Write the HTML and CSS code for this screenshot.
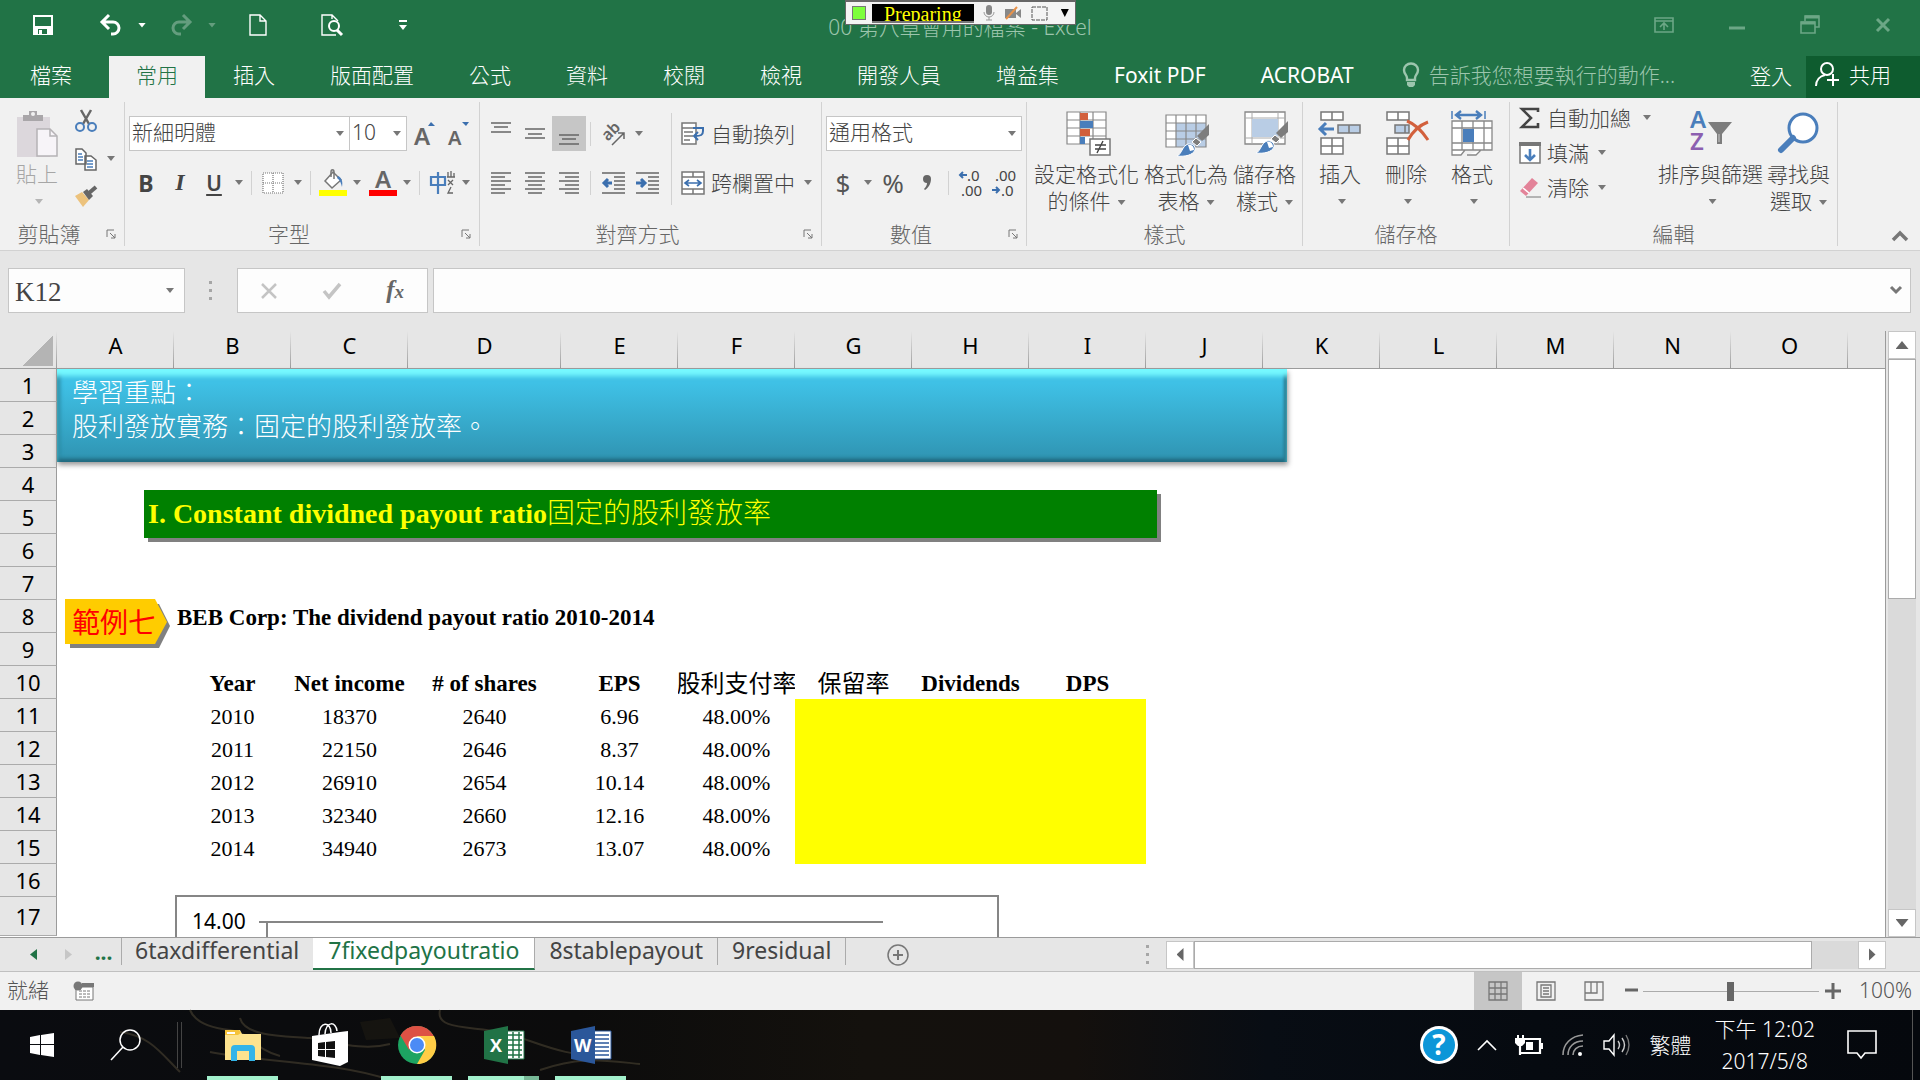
FILE: index.html
```html
<!DOCTYPE html>
<html lang="zh-Hant">

<head>
    <meta charset="UTF-8">
    <meta name="viewport" content="width=device-width, initial-scale=1.0">
    <title>00 第八章會用的檔案 - Excel</title>
    <link rel="stylesheet" href="styles.css">
</head>

<body>
    <header class="titlebar">
        <div class="quick">
            <button class="qbtn" aria-label="儲存檔案"><svg width="20" height="20"><path d="M1 1h18v18H1z" fill="none" stroke="#fff" stroke-width="2"/><path d="M2 11h16v8H2z" fill="#fff"/><path d="M5 14h9v5H5z" fill="#217346"/><path d="M6 15h3v4H6z" fill="#fff"/></svg></button>
            <button class="qbtn wide first" aria-label="復原"><svg width="22" height="22"><path d="M2 8h11a6 6 0 0 1 0 12h-2M9 1L2 8l7 7" fill="none" stroke="#fff" stroke-width="3"/></svg></button>
            <span class="caret white"></span>
            <button class="qbtn wide dim" aria-label="重複"><svg width="22" height="22"><path d="M20 8H9a6 6 0 0 0 0 12h2M13 1l7 7-7 7" fill="none" stroke="#fff" stroke-width="3"/></svg></button>
            <span class="caret white dim"></span>
            <button class="qbtn page" aria-label="開新檔案"><svg width="18" height="22"><path d="M1 1h10l6 6v14H1zM11 1v6h6" fill="none" stroke="#fff" stroke-width="1.4"/></svg></button>
            <button class="qbtn page" aria-label="預覽列印"><svg width="22" height="22"><path d="M17 7l-6-6H1v20h14M11 1v4" fill="none" stroke="#fff" stroke-width="1.4"/><circle cx="13" cy="12" r="5" fill="none" stroke="#fff" stroke-width="2"/><path d="M16 16l5 5" stroke="#fff" stroke-width="3"/></svg></button>
            <button class="qbtn more" aria-label="自訂快速存取工具列"><span></span><i class="caret white"></i></button>
        </div>
        <h1>00 第八章會用的檔案 - Excel</h1>
        <div class="window-buttons">
            <button aria-label="功能區顯示選項"><svg width="20" height="16"><path d="M1 1h18v14H1zM1 4h18M10 13V6M6 10l4-4 4 4" fill="none" stroke="#6ca786" stroke-width="1.6"/></svg></button>
            <button aria-label="最小化"><svg width="16" height="16"><path d="M0 11h16" stroke="#6ca786" stroke-width="3"/></svg></button>
            <button aria-label="還原"><svg width="20" height="20"><path d="M5 6V1h14v11h-4M1 7h14v11H1z" fill="none" stroke="#6ca786" stroke-width="1.6"/><path d="M5 2h14M1 8h14" stroke="#6ca786" stroke-width="3"/></svg></button>
            <button aria-label="關閉"><svg width="16" height="16"><path d="M2 2l12 12M14 2L2 14" stroke="#6ca786" stroke-width="3"/></svg></button>
        </div>
        <!-- screen recorder strip -->
        <div class="recorder">
            <span class="rec-state"></span>
            <span class="rec-text">Preparing</span>
            <svg width="12" height="16"><rect x="3" y="0" width="6" height="10" rx="3" fill="#888"/><path d="M1 7a5 5 0 0 0 10 0M6 12v3M3 15h6" fill="none" stroke="#999"/></svg>
            <svg width="18" height="14"><path d="M1 3h11v9H1zM12 7l5-4v9l-5-4z" fill="#888"/><path d="M2 13L13 1" stroke="#e8924a" stroke-width="2"/></svg>
            <svg width="17" height="15"><rect x="1" y="1" width="15" height="13" fill="none" stroke="#555" stroke-dasharray="4 1"/></svg>
            <i class="caret black"></i>
        </div>
    </header>

    <nav class="tabs">
        <button class="tab file">檔案</button>
        <button class="tab active">常用</button>
        <button class="tab">插入</button>
        <button class="tab">版面配置</button>
        <button class="tab">公式</button>
        <button class="tab">資料</button>
        <button class="tab">校閱</button>
        <button class="tab">檢視</button>
        <button class="tab">開發人員</button>
        <button class="tab">增益集</button>
        <button class="tab latin">Foxit PDF</button>
        <button class="tab latin">ACROBAT</button>
        <label class="tellme">
            <svg width="18" height="26"><path d="M5 18v-2C5 13 2 12 2 8a7 6.500 0 0 1 14 0c0 4-3 5-3 8v2z" fill="none" stroke="#9cc5ad" stroke-width="2.400"/><path d="M5 20h8v3l-2 2H7l-2-2z" fill="#9cc5ad"/></svg>
            <input type="text" placeholder="告訴我您想要執行的動作...">
        </label>
        <button class="tab login">登入</button>
        <button class="share"><svg width="24" height="26"><circle cx="12" cy="8" r="6" fill="none" stroke="#fff" stroke-width="2"/><path d="M1 25c0-6 4-10 9-11M12 19h12M18 13v12" fill="none" stroke="#fff" stroke-width="2"/></svg>共用</button>
    </nav>

    <section class="ribbon">
        <div class="group g-clip">
            <div class="body">
                <button class="big dim"><svg width="42" height="48"><path d="M1 8h33v40H1z" fill="#dcd7dc"/><path d="M7 6h6V2h8v4h6v6H7z" fill="#a9a6a9"/><circle cx="17" cy="5" r="2" fill="#f1f1f1"/><path d="M21 20h13l7 7v20H21z" fill="#f7f4f8" stroke="#b5b2b5" stroke-width="1.500"/><path d="M34 20v7h7" fill="none" stroke="#b5b2b5" stroke-width="1.500"/></svg><span>貼上</span><i class="caret"></i></button>
                <div class="stack">
                    <button class="tool" aria-label="剪下"><svg width="22" height="24"><path d="M6 1l8 14M16 1L8 15" stroke="#666" stroke-width="2.500"/><circle cx="5" cy="18" r="4" fill="none" stroke="#4a7ebb" stroke-width="2"/><circle cx="17" cy="18" r="4" fill="none" stroke="#4a7ebb" stroke-width="2"/></svg></button>
                    <div class="pair"><button class="tool" aria-label="複製"><svg width="22" height="24"><path d="M1 2h6l4 4v11H1zM10 9h6l5 4v10H10z" fill="#fff" stroke="#666" stroke-width="1.500"/><path d="M3 7h4M3 10h5M3 13h5M12 14h6M12 17h6M12 20h6" stroke="#4a7ebb" stroke-width="1.500"/></svg></button><i class="caret"></i></div>
                    <button class="tool" aria-label="複製格式"><svg width="24" height="22"><path d="M1 10l7-4 7 8-6 7z" fill="#ecc27c"/><path d="M9 6l4-3 6 7-4 4z" fill="#666"/><path d="M15 7l7-6" stroke="#666" stroke-width="4"/></svg></button>
                </div>
            </div>
            <div class="foot"><span>剪貼簿</span><button class="launch" aria-label="剪貼簿設定"><svg width="10" height="10"><path d="M1 8V1h7M4 4l5 5M9 5v4H5" fill="none" stroke="#777"/></svg></button></div>
        </div>

        <div class="group g-font">
            <div class="body rows">
                <div class="row">
                    <span class="combo name"><select aria-label="字型"><option>新細明體</option></select></span>
                    <span class="combo size"><select aria-label="字型大小"><option>10</option></select></span>
                    <button class="tool" aria-label="放大字型"><svg width="20" height="26"><text x="0" y="24" font-size="24" class="glyph">A</text><path d="M14 5l3-4 4 4z" fill="#3b6fae"/></svg></button>
                    <button class="tool" aria-label="縮小字型"><svg width="20" height="26"><text x="0" y="24" font-size="20" class="glyph">A</text><path d="M14 1h7l-3 4z" fill="#3b6fae"/></svg></button>
                </div>
                <div class="row">
                    <button class="tool bold">B</button>
                    <button class="tool italic">I</button>
                    <button class="tool under">U</button>
                    <i class="caret"></i><i class="sep"></i>
                    <button class="tool" aria-label="框線"><svg width="22" height="22"><path d="M1 1h20v20H1zM11 1v20M1 11h20" fill="#fff" stroke="#777" stroke-width="1.200" stroke-dasharray="1 1"/></svg></button>
                    <i class="caret"></i><i class="sep"></i>
                    <button class="tool" aria-label="填滿色彩"><svg width="28" height="28"><path d="M7 12l8-9 8 8-9 8z" fill="#fff" stroke="#777" stroke-width="1.500"/><path d="M13 8V3c0-3 3-3 3 0v7" fill="none" stroke="#777" stroke-width="1.500"/><path d="M20 7c4 2 5 6 4 11-1-4-2-7-5-9z" fill="#4a7ebb"/><path d="M1 21h28v6H1z" fill="#ff0"/></svg></button>
                    <i class="caret"></i>
                    <button class="tool" aria-label="字型色彩"><svg width="28" height="28"><text x="7" y="19" font-size="24" class="glyph">A</text><path d="M1 21h28v6H1z" fill="red"/></svg></button>
                    <i class="caret"></i><i class="sep"></i>
                    <button class="tool" aria-label="注音標示"><svg width="24" height="24"><path d="M2 6h14v8H2zM9 1v22" fill="none" stroke="#4a7ebb" stroke-width="2.200"/><path d="M19 1v5M22 0v6M25 2v4M18 6h8M19 9l5 5M24 9l-5 5M22 16l-3 6h5" fill="none" stroke="#666" stroke-width="1.300"/></svg></button>
                    <i class="caret"></i>
                </div>
            </div>
            <div class="foot"><span>字型</span><button class="launch" aria-label="字型設定"><svg width="10" height="10"><path d="M1 8V1h7M4 4l5 5M9 5v4H5" fill="none" stroke="#777"/></svg></button></div>
        </div>

        <div class="group g-align">
            <div class="body">
                <div class="rows">
                    <div class="row">
                        <button class="tool" aria-label="靠上對齊"><svg width="20" height="28"><path d="M0 3h20M3 7h14M0 12h20" class="ln"/></svg></button>
                        <button class="tool" aria-label="置中對齊"><svg width="20" height="28"><path d="M0 9h20M3 14h14M0 18h20" class="ln"/></svg></button>
                        <button class="tool on" aria-label="靠下對齊"><svg width="20" height="28"><path d="M0 15h20M3 19h14M0 24h20" class="ln"/></svg></button>
                        <i class="sep wide"></i>
                        <button class="tool turn" aria-label="方向"><svg width="22" height="22"><g transform="rotate(-45 11 11)"><text x="1" y="12" font-size="16" class="glyph">ab</text></g><path d="M9 22L21 10M15 10h6v6" fill="none" stroke="#666" stroke-width="1.500"/></svg></button>
                        <i class="caret"></i>
                    </div>
                    <div class="row">
                        <button class="tool" aria-label="靠左對齊"><svg width="20" height="24"><path d="M0 2h20M0 6h14M0 10h20M0 14h14M0 18h20M0 22h14" class="ln"/></svg></button>
                        <button class="tool" aria-label="置中"><svg width="20" height="24"><path d="M0 2h20M3 6h14M0 10h20M3 14h14M0 18h20M3 22h14" class="ln"/></svg></button>
                        <button class="tool" aria-label="靠右對齊"><svg width="20" height="24"><path d="M0 2h20M6 6h14M0 10h20M6 14h14M0 18h20M6 22h14" class="ln"/></svg></button>
                        <i class="sep wide"></i>
                        <button class="tool" aria-label="減少縮排"><svg width="24" height="24"><path d="M0 2h23M12 6h11M12 10h11M12 14h11M12 18h11M0 22h23" class="ln"/><path d="M10 12H2M6 8l-4 4 4 4" fill="none" stroke="#3b6fae" stroke-width="3"/></svg></button>
                        <button class="tool" aria-label="增加縮排"><svg width="24" height="24"><path d="M0 2h23M12 6h11M12 10h11M12 14h11M12 18h11M0 22h23" class="ln"/><path d="M0 12h8M5 8l4 4-4 4" fill="none" stroke="#3b6fae" stroke-width="3"/></svg></button>
                    </div>
                </div>
                <i class="sep tall"></i>
                <div class="rows">
                    <button class="labelled"><svg width="24" height="24"><path d="M1 1h14v21H1z" fill="#fff" stroke="#777" stroke-width="1.500"/><path d="M1 6h21M3 10h9M3 14h9M3 18h6" stroke="#777" stroke-width="1.300"/><path d="M12 6h10v3c0 4-2 5-8 5M17 10l-4 4 4 4" fill="none" stroke="#3b6fae" stroke-width="2"/></svg><span>自動換列</span></button>
                    <button class="labelled"><svg width="24" height="24"><path d="M1 1h22v22H1zM1 6h22M1 18h22M12 1v5M12 18v5" fill="#fff" stroke="#777" stroke-width="1.500"/><path d="M4 12h16M8 9l-4 3 4 3M16 9l4 3-4 3" fill="none" stroke="#3b6fae" stroke-width="1.600"/></svg><span>跨欄置中</span><i class="caret"></i></button>
                </div>
            </div>
            <div class="foot"><span>對齊方式</span><button class="launch" aria-label="對齊設定"><svg width="10" height="10"><path d="M1 8V1h7M4 4l5 5M9 5v4H5" fill="none" stroke="#777"/></svg></button></div>
        </div>

        <div class="group g-number">
            <div class="body rows">
                <span class="combo format"><select aria-label="數值格式"><option>通用格式</option></select></span>
                <div class="row">
                    <button class="tool sign">$</button>
                    <i class="caret"></i>
                    <button class="tool sign">%</button>
                    <button class="tool" aria-label="千分位樣式"><svg width="10" height="17"><path d="M5 1a4 4 0 0 1 4 4c0 5-3 9-6 11l-1-1c2-2 3-4 3-6a4 4 0 0 1 0-8z" fill="#666"/></svg></button>
                    <i class="sep"></i>
                    <button class="tool" aria-label="增加小數位數"><svg width="24" height="28"><text x="9" y="12" font-size="15" class="num">.0</text><text x="3" y="27" font-size="15" class="num">.00</text><path d="M9 6H2M5 3L2 6l3 3" fill="none" stroke="#3b6fae" stroke-width="2"/></svg></button>
                    <button class="tool" aria-label="減少小數位數"><svg width="24" height="28"><text x="3" y="12" font-size="15" class="num">.00</text><text x="9" y="27" font-size="15" class="num">.0</text><path d="M0 21h7M4 18l3 3-3 3" fill="none" stroke="#3b6fae" stroke-width="2"/></svg></button>
                </div>
            </div>
            <div class="foot"><span>數值</span><button class="launch" aria-label="數值設定"><svg width="10" height="10"><path d="M1 8V1h7M4 4l5 5M9 5v4H5" fill="none" stroke="#777"/></svg></button></div>
        </div>

        <div class="group g-style">
            <div class="body">
                <button class="big"><svg width="42" height="48"><path d="M1 3h39v32H1zM14 3v32M27 3v32M1 11h39M1 19h39M1 27h39" fill="#fff" stroke="#888" stroke-width="1.200"/><path d="M14 4h8v7h-8zM14 20h10v7H14z" fill="#d2603c"/><path d="M14 12h13v7H14zM14 28h5v7h-5z" fill="#4a7ebb"/><path d="M24 30h20v16H24z" fill="#fff" stroke="#777" stroke-width="1.500"/><path d="M29 36h11M29 40h11M37 32l-6 12" stroke="#444" stroke-width="1.400"/></svg><span>設定格式化<br>的條件<i class="caret"></i></span></button>
                <button class="big"><svg width="42" height="48"><path d="M1 6h40v32H1z" fill="#fff"/><path d="M11 14h30v24H11z" fill="#b9cde5"/><path d="M1 6h40v32H1zM11 6v32M21 6v32M31 6v32M1 14h40M1 22h40M1 30h40" fill="none" stroke="#888" stroke-width="1.200"/><path d="M44 15v11l-7 6-5-5z" fill="#7d7d7d"/><path d="M31 29l5 4-4 4-5-4z" fill="#7d7d7d" stroke="#fff"/><path d="M12 47c5-2 5-10 11-12 4-1 8 2 7 6-2 5-10 7-18 6z" fill="#4a7ebb" stroke="#fff"/><path d="M23 36c4-1 6 2 6 5l-4 1z" fill="#fff"/></svg><span>格式化為<br>表格<i class="caret"></i></span></button>
                <button class="big"><svg width="42" height="48"><path d="M1 3h40v32H1z" fill="#fff" stroke="#888" stroke-width="1.300"/><path d="M1 9h40M1 29h40M8 3v32M34 3v32" stroke="#aaa"/><path d="M8 10h26v18H8z" fill="#b9cde5"/><path d="M44 12v11l-7 6-5-5z" fill="#7d7d7d"/><path d="M31 26l5 4-4 4-5-4z" fill="#7d7d7d" stroke="#fff"/><path d="M12 44c5-2 5-10 11-12 4-1 8 2 7 6-2 5-10 7-18 6z" fill="#4a7ebb" stroke="#fff"/><path d="M23 33c4-1 6 2 6 5l-4 1z" fill="#fff"/></svg><span>儲存格<br>樣式<i class="caret"></i></span></button>
            </div>
            <div class="foot"><span>樣式</span></div>
        </div>

        <div class="group g-cells">
            <div class="body">
                <button class="big"><svg width="46" height="48"><path d="M4 3h22v8H4zM15 3v8M4 29h22v16H4zM15 29v16M4 37h22" fill="#fff" stroke="#777" stroke-width="1.500"/><path d="M21 16h22v8H21zM32 16v8" fill="#b9cde5" stroke="#777" stroke-width="1.500"/><path d="M17 20H3M9 14l-6 6 6 6" fill="none" stroke="#4a7ebb" stroke-width="3"/></svg><span>插入</span><i class="caret"></i></button>
                <button class="big"><svg width="46" height="48"><path d="M4 3h22v8H4zM15 3v8M4 29h22v16H4zM15 29v16M4 37h22" fill="#fff" stroke="#777" stroke-width="1.500"/><path d="M12 16h14v8H12zM22 16v8" fill="#b9cde5" stroke="#777" stroke-width="1.500"/><path d="M24 12c8 3 15 10 21 19M45 13c-8 3-15 9-20 18" fill="none" stroke="#d2603c" stroke-width="3"/></svg><span>刪除</span><i class="caret"></i></button>
                <button class="big"><svg width="46" height="48"><path d="M3 2v8M36 2v8" stroke="#4a7ebb" stroke-width="1.500"/><path d="M7 6h25M12 2L7 6l5 4M27 2l5 4-5 4" fill="none" stroke="#4a7ebb" stroke-width="2.400"/><path d="M3 12h40v29H3zM13 12v29M24 12v29M35 12v29M3 19h40M3 34h40M3 41v5h9l4-5M18 46h9l5-5" fill="#fff" stroke="#888" stroke-width="1.300"/><path d="M14 20h11v13H14z" fill="#4a7ebb"/></svg><span>格式</span><i class="caret"></i></button>
            </div>
            <div class="foot"><span>儲存格</span></div>
        </div>

        <div class="group g-edit">
            <div class="body">
                <div class="list">
                    <button class="labelled"><svg width="22" height="22"><path d="M19 5V2H3l9 9-9 9h16v-4" fill="none" stroke="#444" stroke-width="2.600"/></svg><span>自動加總</span><i class="caret far"></i></button>
                    <button class="labelled"><svg width="22" height="22"><path d="M1 1h20v20H1z" fill="#fff" stroke="#777" stroke-width="1.500"/><path d="M0 0h22v4H0z" fill="#777"/><path d="M11 7v11M6 13l5 5 5-5" fill="none" stroke="#4a7ebb" stroke-width="2.600"/></svg><span>填滿</span><i class="caret"></i></button>
                    <button class="labelled"><svg width="22" height="22"><path d="M1 14L13 1l6 5L7 19z" fill="#e38399"/><path d="M4 11l6 5" stroke="#fff" stroke-width="1.500"/><path d="M7 20h15" stroke="#777"/></svg><span>清除</span><i class="caret"></i></button>
                </div>
                <button class="big"><svg width="46" height="48"><text x="2" y="19" font-size="24" fill="#4a7ebb" class="az">A</text><text x="2" y="41" font-size="24" fill="#8c5fb0" class="az">Z</text><path d="M20 13h24L34 25v10h-5V25z" fill="#7d7d7d"/><path d="M31 25v8" stroke="#ccc"/></svg><span>排序與篩選</span><i class="caret"></i></button>
                <button class="big"><svg width="46" height="48"><circle cx="27" cy="19" r="14" fill="#fff" stroke="#4a7ebb" stroke-width="3"/><path d="M17 29L5 41" stroke="#4a7ebb" stroke-width="6" stroke-linecap="round"/></svg><span>尋找與<br>選取<i class="caret"></i></span></button>
            </div>
            <div class="foot"><span>編輯</span></div>
        </div>
        <button class="collapse" aria-label="摺疊功能區"><svg width="18" height="12"><path d="M2 10l7-7 7 7" fill="none" stroke="#777" stroke-width="3.500"/></svg></button>
    </section>

    <section class="formula">
        <span class="namebox"><input type="text" value="K12" aria-label="名稱方塊"><i class="caret"></i></span>
        <span class="dots"></span>
        <div class="fx">
            <button aria-label="取消"><svg width="18" height="18"><path d="M2 2l14 14M16 2L2 16" stroke="#c4c4c4" stroke-width="2.500"/></svg></button>
            <button aria-label="輸入"><svg width="20" height="18"><path d="M2 9l5 6L18 2" fill="none" stroke="#c4c4c4" stroke-width="3.500"/></svg></button>
            <button class="fxbtn"><i>f</i><small>x</small></button>
        </div>
        <span class="formula-input"><input type="text" aria-label="資料編輯列"><svg width="12" height="9"><path d="M1 1l5 5 5-5" fill="none" stroke="#777" stroke-width="3"/></svg></span>
    </section>

    <main class="work">
        <div class="sheet">
            <table>
                <colgroup>
                    <col class="rowno"><col><col><col><col class="c-d"><col><col><col><col><col><col><col><col><col><col><col><col class="rest">
                </colgroup>
                <thead>
                    <tr><th class="corner"></th><th>A</th><th>B</th><th>C</th><th>D</th><th>E</th><th>F</th><th>G</th><th>H</th><th>I</th><th>J</th><th>K</th><th>L</th><th>M</th><th>N</th><th>O</th><th></th></tr>
                </thead>
                <tbody>
                    <tr><th>1</th></tr>
                    <tr><th>2</th></tr>
                    <tr><th>3</th></tr>
                    <tr><th>4</th></tr>
                    <tr><th>5</th></tr>
                    <tr><th>6</th></tr>
                    <tr><th>7</th></tr>
                    <tr><th>8</th><td></td><td colspan="6" class="caption">BEB Corp: The dividend payout ratio 2010-2014</td></tr>
                    <tr><th>9</th></tr>
                    <tr class="heads"><th>10</th><td></td><td>Year</td><td>Net income</td><td># of shares</td><td>EPS</td><td class="zh"><span>股利支付率</span></td><td class="zh"><span>保留率</span></td><td>Dividends</td><td>DPS</td></tr>
                    <tr><th>11</th><td></td><td>2010</td><td>18370</td><td>2640</td><td>6.96</td><td>48.00%</td><td class="fill"></td><td class="fill"></td><td class="fill"></td></tr>
                    <tr><th>12</th><td></td><td>2011</td><td>22150</td><td>2646</td><td>8.37</td><td>48.00%</td><td class="fill"></td><td class="fill"></td><td class="fill"></td></tr>
                    <tr><th>13</th><td></td><td>2012</td><td>26910</td><td>2654</td><td>10.14</td><td>48.00%</td><td class="fill"></td><td class="fill"></td><td class="fill"></td></tr>
                    <tr><th>14</th><td></td><td>2013</td><td>32340</td><td>2660</td><td>12.16</td><td>48.00%</td><td class="fill"></td><td class="fill"></td><td class="fill"></td></tr>
                    <tr><th>15</th><td></td><td>2014</td><td>34940</td><td>2673</td><td>13.07</td><td>48.00%</td><td class="fill"></td><td class="fill"></td><td class="fill"></td></tr>
                    <tr><th>16</th></tr>
                    <tr class="last"><th>17</th></tr>
                </tbody>
            </table>
            <!-- drawing objects floating over the cells -->
            <div class="note">學習重點：<br>股利發放實務：固定的股利發放率。</div>
            <div class="banner">I. Constant dividned payout ratio<span>固定的股利發放率</span></div>
            <div class="example">
                <svg width="108" height="51"><path d="M5 5h89l11 22-11 22H5z" fill="#808080"/><path d="M0 0h90l12 23-12 22H0z" fill="#fc0"/></svg>
                <span>範例七</span>
            </div>
            <div class="chart">
                <span>14.00</span>
                <svg width="624" height="20"><path d="M0 5h624" stroke="#868686" stroke-width="2"/><path d="M8 5v25" stroke="#868686" stroke-width="2"/></svg>
            </div>
        </div>
        <div class="vscroll">
            <button aria-label="向上捲動"><i class="up"></i></button>
            <div class="thumb"></div>
            <div class="track"></div>
            <button aria-label="向下捲動"><i class="down"></i></button>
        </div>
    </main>

    <div class="sheetbar">
        <button class="nav" aria-label="上一張"><i class="left green"></i></button>
        <button class="nav" aria-label="下一張"><i class="right pale"></i></button>
        <button class="nav ell">...</button>
        <button class="stab">6taxdifferential</button>
        <button class="stab current">7fixedpayoutratio</button>
        <button class="stab">8stablepayout</button>
        <button class="stab">9residual</button>
        <button class="add" aria-label="新工作表"><svg width="24" height="24"><circle cx="12" cy="12" r="10" fill="none" stroke="#777" stroke-width="1.500"/><path d="M12 7v10M7 12h10" stroke="#777" stroke-width="2"/></svg></button>
        <span class="dots"></span>
        <div class="hscroll">
            <button aria-label="向左捲動"><i class="left"></i></button>
            <div class="thumb"></div>
            <div class="track"></div>
            <button aria-label="向右捲動"><i class="right"></i></button>
        </div>
    </div>

    <div class="status">
        <span>就緒</span>
        <svg class="macro" width="22" height="20"><path d="M3 6h17v13H3z" fill="#fff" stroke="#777"/><path d="M9 2h12v4H9z" fill="#777"/><path d="M6 10h12M6 13h12M6 16h12" stroke="#777" stroke-dasharray="3 1"/><circle cx="5" cy="5" r="4.500" fill="#777"/></svg>
        <button class="view on" aria-label="標準模式"><svg width="20" height="20"><path d="M1 1h18v18H1zM7 1v18M13 1v18M1 7h18M1 13h18" fill="none" stroke="#777" stroke-width="1.300"/></svg></button>
        <button class="view" aria-label="整頁模式"><svg width="20" height="20"><path d="M1 1h18v18H1zM5 4h10v12H5zM7 7h6M7 10h6M7 13h6" fill="none" stroke="#777" stroke-width="1.300"/></svg></button>
        <button class="view" aria-label="分頁預覽"><svg width="20" height="20"><path d="M1 1h18v18H1zM1 12h12V1M7 1v11" fill="none" stroke="#777" stroke-width="1.300"/></svg></button>
        <button class="zoom" aria-label="縮小"><svg width="16" height="16"><path d="M1 7h13" stroke="#666" stroke-width="3"/></svg></button>
        <input type="range" aria-label="縮放" value="50">
        <button class="zoom in" aria-label="放大"><svg width="16" height="16"><path d="M0 8h16M8 0v16" stroke="#666" stroke-width="3"/></svg></button>
        <span class="percent">100%</span>
    </div>

    <footer class="taskbar">
        <svg class="texture" width="900" height="70" fill="none" stroke="#4a4232" stroke-width="2"><path d="M190 0c5 12 20 18 40 20s25 20 50 26M240 8c5 20 50 18 70 20s50 14 80 6M210 42c50 10 130 10 180 28M440 0c-5 20 30 16 60 22s60 26 110 24M540 60c40-14 60-10 100-6M120 22c30 4 40 20 60 40"/><path d="M360 12l30-4 10 20-34 2z" fill="#1d1a12" stroke="none"/></svg>
        <button class="start" aria-label="開始"><svg width="24" height="24" fill="#fff"><path d="M0 4l10-2v9H0zM11 2l13-2v11H11zM0 12h10v10L0 20zM11 12h13v12l-13-2z"/></svg></button>
        <button class="start search" aria-label="搜尋"><svg width="32" height="32"><circle cx="20" cy="11" r="10" fill="none" stroke="#fff" stroke-width="1.500"/><path d="M13 18L1 31" stroke="#fff" stroke-width="1.500"/></svg></button>
        <i class="divider"></i>
        <button class="app open" aria-label="檔案總管"><svg width="38" height="34"><path d="M1 2h15l2 4h19v26H1z" fill="#fde38f"/><path d="M1 2h14l2 3-3 2H1z" fill="#f5c33b"/><path d="M3 4h8v2H3z" fill="#fff"/><path d="M7 33V21q0-4 4-4h16q4 0 4 4v12h-6V23H13v10z" fill="#33b4e8"/></svg></button>
        <button class="app" aria-label="市集"><svg width="38" height="44"><path d="M8 12C8-2 20-2 20 10M14 11C15-2 25-2 26 8" fill="none" stroke="#fff" stroke-width="1.500"/><path d="M1 13l28-4 8-1v31l-8 4-28-6z" fill="#fff"/><path d="M7 20l7-1v7H7zM15 19l9-1v8h-9zM7 27h7v7l-7-1zM15 27h9v8l-9-1z" fill="#111"/></svg></button>
        <button class="app open" aria-label="Chrome"><svg width="40" height="40"><circle cx="20" cy="20" r="19" fill="#1da462"/><path d="M20 20L3.500 10.500A19 19 0 0 1 36.500 10.500z" fill="#dd5144"/><path d="M20 11h17A19 19 0 0 1 20 39l8-14z" fill="#ffcd46"/><path d="M3.500 10.500L12 25l8-14h16.500A19 19 0 0 0 3.500 10.500z" fill="#dd5144"/><circle cx="20" cy="20" r="8.500" fill="#fff"/><circle cx="20" cy="20" r="7" fill="#4c8bf5"/></svg></button>
        <button class="app open multi" aria-label="Excel"><svg width="40" height="38"><path d="M20 5h20v28H20z" fill="#fff" stroke="#217346"/><path d="M23 9h15M23 14h15M23 19h15M23 24h15M23 29h15M29 6v26M35 6v26" stroke="#217346" stroke-width="1.500"/><path d="M0 5l24-5v38L0 33z" fill="#217346"/><text x="6" y="26" class="logo">X</text></svg></button>
        <button class="app open" aria-label="Word"><svg width="40" height="38"><path d="M20 5h20v28H20z" fill="#fff" stroke="#2b579a"/><path d="M23 9h15M23 13h15M23 17h15M23 21h15M23 25h15M23 29h15" stroke="#2b579a" stroke-width="1.600"/><path d="M0 5l24-5v38L0 33z" fill="#2b579a"/><text x="3" y="26" class="logo">W</text></svg></button>
        <div class="tray">
            <svg width="40" height="40"><circle cx="20" cy="20" r="19" fill="#fff"/><circle cx="20" cy="20" r="16" fill="#0c96d8"/><text x="20" y="30" text-anchor="middle" class="help">?</text></svg>
            <svg width="20" height="12"><path d="M1 11l9-9 9 9" fill="none" stroke="#fff" stroke-width="1.600"/></svg>
            <svg width="28" height="20"><path d="M8 4h17v14H5M5 8v12" fill="none" stroke="#fff" stroke-width="2.200"/><path d="M11 7h7v8h-7zM25 8h3v6h-3zM0 3h10v5l-3 3H3L0 8zM2 0h2v4H2zM7 0h2v4H7z" fill="#fff"/></svg>
            <svg width="24" height="24" fill="none" stroke="#999" stroke-width="1.600"><path d="M2 22C2 11 10 3 22 2M7 22c0-8 6-14 15-14M12 22c0-5 4-9 10-9"/><circle cx="19" cy="21" r="2" fill="#fff" stroke="none"/></svg>
            <svg width="28" height="24" fill="none" stroke="#fff" stroke-width="1.400"><path d="M1 8h5l5-6v20l-5-6H1z"/><path d="M15 8q3 4 0 8M19 5q5 7 0 14" stroke="#ccc"/><path d="M23 2q6 10 0 20" stroke="#777"/></svg>
            <span>繁體</span>
            <time>下午 12:02<br>2017/5/8</time>
            <svg class="action" width="30" height="30"><path d="M1 1h28v22H18l-4 5-4-5H1z" fill="none" stroke="#fff" stroke-width="1.600"/></svg>
            <i class="peek"></i>
        </div>
    </footer>
</body>

</html>
```
FILE: styles.css
```css
* {
    box-sizing: border-box;
}

body {
    margin: 0;
    height: 100vh;
    display: flex;
    flex-direction: column;
    overflow: hidden;
    background-color: #e6e6e6;
    font-family: "Noto Sans", "Noto Sans CJK TC", sans-serif;
    font-weight: 300;
    font-size: 21px;
    color: #444;
}

button,
input,
select {
    font: inherit;
    color: inherit;
    margin: 0;
    padding: 0;
    border: 0;
    border-radius: 0;
    background: none;
}

svg {
    display: block;
    flex: none;
    overflow: visible;
}

.caret {
    display: inline-block;
    flex: none;
    width: 8px;
    height: 5px;
    margin: 0 4px;
    background-color: #777;
    clip-path: polygon(0 0, 100% 0, 50% 100%);
}

.caret.white {
    background-color: #fff;
}

.caret.black {
    background-color: #000;
    height: 8px;
}

.dim {
    opacity: 0.3;
}

/* title bar */
.titlebar {
    position: relative;
    flex: none;
    height: 56px;
    display: flex;
    align-items: center;
    justify-content: space-between;
    padding: 0 13px 6px 24px;
    background-color: #217346;
}

.titlebar h1 {
    position: absolute;
    left: 50%;
    top: 12px;
    margin: 0;
    transform: translateX(-50%);
    font-size: 21px;
    line-height: 30px;
    font-weight: 300;
    color: #9cc5ad;
    white-space: nowrap;
}

.quick {
    display: flex;
    align-items: center;
}

.qbtn {
    width: 38px;
    height: 38px;
    display: grid;
    place-items: center;
}

.qbtn.wide {
    width: 42px;
    margin-left: 10px;
}

.qbtn.wide.first {
    margin-left: 28px;
}

.qbtn.wide + .caret {
    margin: 0 4px 0 6px;
}

.qbtn.page {
    margin-left: 15px;
    width: 46px;
    margin-right: 13px;
}

.qbtn.more {
    margin-left: 16px;
    align-content: center;
    gap: 3px;
}

.qbtn.more span {
    width: 8px;
    height: 2px;
    background-color: #fff;
}

.window-buttons {
    display: flex;
    gap: 25px;
}

.window-buttons button {
    width: 48px;
    display: grid;
    place-items: center;
}

.recorder {
    position: absolute;
    left: 44%;
    top: 0;
    width: 231px;
    height: 25px;
    display: flex;
    align-items: center;
    gap: 9px;
    padding: 0 4px 0 6px;
    background-color: #f4f4f4;
    border: 1px solid #666;
    border-top-width: 2px;
}

.rec-state {
    width: 14px;
    height: 14px;
    background-color: #7dff3c;
    border: 1px solid #777;
}

.rec-text {
    width: 102px;
    height: 19px;
    overflow: hidden;
    background-color: #000;
    color: #ff0;
    font-family: "Liberation Serif", serif;
    font-size: 20px;
    line-height: 21px;
    text-align: center;
    border-bottom: 2px solid #777;
}

.recorder .rec-state + .rec-text {
    margin-left: -3px;
}

.recorder .caret {
    margin: 0 0 0 4px;
}

/* ribbon tabs */
.tabs {
    flex: none;
    height: 42px;
    display: flex;
    gap: 1px;
    background-color: #217346;
    color: #fff;
}

.tab {
    padding: 0 27px 6px;
    white-space: nowrap;
}

.tab.file {
    padding: 0 36px 6px 30px;
}

.tab.active {
    background-color: #f1f1f1;
    color: #217346;
}

.tab.latin {
    font-weight: 400;
    padding-bottom: 4px;
}

.tellme {
    flex: 1;
    display: flex;
    align-items: center;
    gap: 9px;
    padding: 0 0 4px 20px;
}

.tellme input {
    flex: 1;
    min-width: 0;
    outline: none;
}

.tellme input::placeholder {
    color: #9cc5ad;
    opacity: 1;
}

.tab.login {
    padding: 0 13px 4px;
}

.share {
    display: flex;
    align-items: center;
    gap: 10px;
    padding: 0 29px 6px 9px;
    background-color: #0e5c2f;
}

/* ribbon */
.ribbon {
    flex: none;
    height: 153px;
    display: flex;
    padding: 4px 0;
    background-color: #f1f1f1;
    border-bottom: 1px solid #d2d2d2;
}

.group {
    flex: none;
    display: flex;
    flex-direction: column;
    border-right: 1px solid #d2d2d2;
}

.body {
    flex: 1;
    display: flex;
}

.foot {
    height: 25px;
    display: flex;
    align-items: center;
    color: #666;
}

.foot span {
    flex: 1;
    text-align: center;
    line-height: 24px;
}

.launch {
    width: 26px;
    display: grid;
    place-items: center;
}

.g-clip {
    width: 125px;
}

.g-clip .body {
    padding-left: 10px;
}

.g-font {
    width: 355px;
}

.g-align {
    width: 342px;
}

.g-number {
    width: 205px;
}

.g-style {
    width: 276px;
}

.g-cells {
    width: 207px;
}

.g-edit {
    width: 328px;
}

.rows {
    display: flex;
    flex-direction: column;
    gap: 14px;
    padding-top: 14px;
}

.g-font .rows,
.g-number .rows,
.g-align .body {
    padding-left: 4px;
}

.row {
    height: 35px;
    display: flex;
    align-items: center;
}

.tool {
    width: 34px;
    height: 35px;
    flex: none;
    display: grid;
    place-items: center;
}

.tool.on {
    background-color: #c6c6c6;
}

.tool.bold {
    font-weight: 700;
    font-size: 23px;
}

.tool.italic {
    font-family: "Liberation Serif", serif;
    font-style: italic;
    font-weight: 700;
    font-size: 24px;
}

.tool.under {
    font-weight: 600;
    font-size: 21px;
    text-decoration: underline;
    text-underline-offset: 3px;
}

.tool.sign {
    font-size: 26px;
    font-weight: 400;
    color: #555;
}

.sep {
    width: 1px;
    height: 24px;
    margin: 0 4px;
    background-color: #d2d2d2;
}

.sep.wide {
    margin: 0 6px 0 4px;
}

.sep.tall {
    height: 92px;
    margin: 11px 9px 0 6px;
}

.ln {
    stroke: #666;
    stroke-width: 1.5px;
}

.glyph {
    font-family: "Noto Sans", sans-serif;
    font-weight: 600;
    fill: #666;
}

.num {
    font-family: "Noto Sans", sans-serif;
    font-weight: 400;
    fill: #444;
}

.az {
    font-family: "Noto Sans", sans-serif;
    font-weight: 600;
}

.combo {
    position: relative;
    display: block;
    height: 35px;
    border: 1px solid #c6c6c6;
    background-color: #fff;
}

.combo select {
    width: 100%;
    height: 100%;
    padding: 0 0 3px 2px;
    appearance: none;
    outline: none;
}

.combo::after {
    content: "";
    position: absolute;
    right: 5px;
    top: 14px;
    width: 8px;
    height: 5px;
    background-color: #777;
    clip-path: polygon(0 0, 100% 0, 50% 100%);
}

.combo.name {
    width: 221px;
    margin-right: -1px;
}

.combo.size {
    width: 58px;
}

.combo.format {
    width: 196px;
}

.labelled {
    height: 35px;
    display: flex;
    align-items: center;
    gap: 6px;
    white-space: nowrap;
}

.labelled span {
    padding-bottom: 2px;
}

.labelled .caret {
    margin: 0 3px;
}

.labelled .caret.far {
    margin-left: 6px;
}

.big {
    flex: none;
    display: flex;
    flex-direction: column;
    align-items: center;
    padding: 7px 2px 0;
    line-height: 27px;
    white-space: nowrap;
}

.big svg {
    margin-bottom: 4px;
}

.big .caret {
    margin: 11px 0 0 4px;
}

.big span .caret {
    margin: 0 0 4px 7px;
}

.big.dim {
    width: 54px;
    opacity: 1;
    color: #a6a6a6;
}

.big.dim .caret {
    background-color: #b5b5b5;
}

.stack {
    display: flex;
    flex-direction: column;
    gap: 3px;
    padding: 1px 0 0 5px;
}

.pair {
    display: flex;
    align-items: center;
}

.g-style .body {
    gap: 1px;
    padding-left: 5px;
}

.g-cells .body {
    padding-left: 4px;
}

.g-cells .big {
    width: 66px;
}

.g-edit .body {
    padding-left: 9px;
}

.list {
    width: 137px;
    margin-top: -2px;
}

.collapse {
    margin-left: auto;
    align-self: flex-end;
    padding: 0 11px 4px;
}

/* formula bar */
.formula {
    flex: none;
    display: flex;
    padding: 17px 9px 18px 8px;
}

.namebox,
.fx,
.formula-input {
    height: 45px;
    display: flex;
    align-items: center;
    background-color: #fdfdfd;
    border: 1px solid #c6c6c6;
}

.namebox {
    width: 177px;
    padding: 0 6px 0;
    font-family: "Liberation Serif", serif;
    font-size: 27px;
}

.namebox input {
    flex: 1;
    min-width: 0;
    padding-top: 4px;
    outline: none;
}

.dots {
    width: 3px;
    height: 20px;
    align-self: center;
    background: repeating-linear-gradient(#a6a6a6 0 3px, transparent 3px 8px);
}

.formula .dots {
    margin: 0 25px 0 24px;
}

.fx {
    width: 191px;
    justify-content: space-between;
    padding: 0 23px 0 22px;
    margin-right: 5px;
}

.fxbtn {
    font-family: "Liberation Serif", serif;
    font-weight: 700;
    font-style: italic;
    font-size: 25px;
    line-height: 30px;
    color: #666;
}

.fxbtn small {
    font-size: 19px;
}

.formula-input {
    flex: 1;
    padding: 0 8px;
}

.formula-input input {
    flex: 1;
    outline: none;
}

/* worksheet */
.work {
    flex: 1;
    min-height: 0;
    display: flex;
}

.sheet {
    position: relative;
    flex: 1;
    min-width: 0;
    overflow: hidden;
    background-color: #fff;
    border-right: 1px solid #9b9b9b;
}

.sheet table {
    width: 100%;
    table-layout: fixed;
    border-collapse: separate;
    border-spacing: 0;
    font-family: "Liberation Serif", "Noto Sans CJK TC", serif;
    font-size: 22px;
    font-weight: 400;
    color: #000;
}

.sheet col {
    width: 117px;
}

.sheet col.rowno {
    width: 57px;
}

.sheet col.c-d {
    width: 153px;
}

.sheet col.rest {
    width: auto;
}

.sheet th {
    font-family: "Noto Sans", sans-serif;
    font-weight: 400;
    background-color: #e6e6e6;
}

.sheet thead th {
    height: 38px;
    padding: 0 0 9px;
    line-height: 28px;
    border-bottom: 1px solid #9b9b9b;
    background: linear-gradient(#e6e6e6, #9b9b9b) right / 1px 100% no-repeat #e6e6e6;
}

.sheet thead th:last-child {
    background: #e6e6e6;
}

.sheet thead .corner {
    background:
        linear-gradient(#e6e6e6, #9b9b9b) right / 1px 100% no-repeat,
        linear-gradient(135deg, #e6e6e6 50%, #b4b4b4 50%) 22px 5px / 31px 30px no-repeat #e6e6e6;
}

.sheet tbody tr {
    height: 33px;
}

.sheet tbody tr.last {
    height: 39px;
}

.sheet tbody th {
    padding: 0;
    line-height: 28px;
    border-right: 1px solid #9b9b9b;
    border-bottom: 1px solid #ababab;
}

.sheet td {
    padding: 3px 0 0;
    line-height: 28px;
    text-align: center;
    white-space: nowrap;
}

.sheet td.caption {
    padding: 2px 0 0 3px;
    text-align: left;
    font-size: 23px;
    font-weight: 700;
}

.heads td {
    font-size: 23px;
    font-weight: 700;
}

.heads td.zh {
    font-size: 24px;
    font-weight: 400;
}

.zh span {
    display: flex;
    justify-content: center;
    overflow: hidden;
}

.sheet td.fill {
    background-color: #ff0;
}

.note {
    position: absolute;
    left: 57px;
    top: 38px;
    width: 1230px;
    height: 93px;
    padding: 6px 15px;
    line-height: 34px;
    font-size: 26px;
    color: #fff;
    background: linear-gradient(#3fc1e6, #3fc1e6 15%, #2f93b1);
    box-shadow: inset 0 8px 5px -1px #76f9ff, inset -3px 0 3px #226f86, inset 0 -3px 4px #1f6478, inset 3px 0 4px #2b8ba8, 1px 3px 5px #999;
}

.banner {
    position: absolute;
    left: 144px;
    top: 159px;
    width: 1013px;
    height: 48px;
    padding-left: 4px;
    display: flex;
    align-items: center;
    background-color: #008000;
    box-shadow: 4px 4px #808080;
    color: #ff0;
    font-family: "Liberation Serif", "Noto Sans CJK TC", serif;
    font-size: 28px;
    font-weight: 700;
    line-height: 40px;
}

.banner span {
    font-weight: 300;
}

.example {
    position: absolute;
    left: 65px;
    top: 268px;
}

.example span {
    position: absolute;
    left: 7px;
    top: 0;
    line-height: 46px;
    font-size: 28px;
    font-weight: 400;
    color: #f00;
    white-space: nowrap;
}

.chart {
    position: absolute;
    left: 175px;
    top: 564px;
    width: 824px;
    height: 60px;
    display: flex;
    align-items: flex-start;
    padding: 10px 15px;
    background-color: #fff;
    border: 2px solid #868686;
    color: #000;
    gap: 13px;
    line-height: 28px;
}

.chart span {
    font-weight: 400;
}

.chart svg {
    margin-top: 10px;
}

.vscroll {
    width: 34px;
    display: flex;
    flex-direction: column;
    padding: 0 4px 0 2px;
}

.vscroll button,
.hscroll button {
    flex: none;
    width: 28px;
    height: 28px;
    display: grid;
    place-items: center;
    background-color: #fff;
    border: 1px solid #c6c6c6;
}

.vscroll .thumb {
    height: 240px;
    background-color: #fff;
    border: 1px solid #ababab;
}

.track {
    flex: 1;
    background-color: #dadada;
}

.up,
.down {
    width: 13px;
    height: 8px;
    background-color: #666;
    clip-path: polygon(50% 0, 100% 100%, 0 100%);
}

.down {
    clip-path: polygon(0 0, 100% 0, 50% 100%);
}

.left,
.right {
    width: 7px;
    height: 13px;
    background-color: #666;
    clip-path: polygon(100% 0, 100% 100%, 0 50%);
}

.right {
    clip-path: polygon(0 0, 100% 50%, 0 100%);
}

.left.green {
    height: 11px;
    background-color: #217346;
}

.right.pale {
    height: 11px;
    background-color: #c6c6c6;
}

/* sheet tabs */
.sheetbar {
    flex: none;
    height: 35px;
    display: flex;
    align-items: center;
    padding: 0 34px 0 16px;
    border-top: 1px solid #9b9b9b;
    border-bottom: 1px solid #c0c0c0;
}

.nav {
    width: 35px;
    display: grid;
    place-items: center;
}

.nav.ell {
    font-weight: 700;
    color: #217346;
    line-height: 24px;
    padding-bottom: 6px;
}

.stab {
    height: 27px;
    align-self: flex-start;
    padding: 0 14px 3px;
    line-height: 24px;
    font-size: 23px;
    font-weight: 400;
    border-right: 1px solid #ababab;
}

.nav.ell + .stab {
    border-left: 1px solid #ababab;
    border-right: 0;
    padding-left: 13px;
}

.stab.current {
    height: 32px;
    padding: 0 15px 6px;
    background-color: #fff;
    color: #217346;
    border-bottom: 2px solid #217346;
}

.add {
    margin-left: 40px;
}

.sheetbar .dots {
    margin-left: auto;
}

.hscroll {
    flex: none;
    width: 720px;
    display: flex;
    margin-left: 17px;
}

.hscroll .thumb {
    flex: 1;
    background-color: #fff;
    border: 1px solid #ababab;
}

.hscroll .track {
    flex: none;
    width: 46px;
}

/* status bar */
.status {
    flex: none;
    height: 38px;
    display: flex;
    align-items: center;
    padding: 0 8px 0 7px;
    background-color: #f1f1f1;
    color: #555;
}

.status > span {
    line-height: 26px;
    padding-bottom: 2px;
}

.macro {
    margin: 0 auto 0 24px;
}

.view {
    width: 48px;
    height: 38px;
    display: grid;
    place-items: center;
}

.view.on {
    background-color: #c6c6c6;
}

.zoom {
    margin-left: 6px;
}

.status input {
    width: 176px;
    height: 20px;
    margin-left: 3px;
    appearance: none;
    background: linear-gradient(#ababab, #ababab) center / 100% 1px no-repeat;
}

.status input::-webkit-slider-thumb {
    appearance: none;
    width: 7px;
    height: 19px;
    background-color: #666;
}

.percent {
    margin-left: 18px;
}

/* taskbar */
.taskbar {
    position: relative;
    flex: none;
    height: 70px;
    display: flex;
    align-items: center;
    background: linear-gradient(90deg, #0a0c10, #0c0c0c 30%, #14110d 45%, #14100d 56%, #080d14 66%, #060a10 80%, #05080d);
    color: #fff;
}

.texture {
    position: absolute;
    left: 0;
    top: 0;
    opacity: 0.6;
}

.start {
    position: relative;
    width: 84px;
    height: 70px;
    display: grid;
    place-items: center;
}

.divider {
    width: 5px;
    height: 46px;
    margin: 0 20px 0 9px;
    border: solid #444;
    border-width: 0 1px;
}

.app {
    position: relative;
    width: 71px;
    height: 70px;
    margin-left: 5px;
    margin-right: 11px;
    display: grid;
    place-items: center;
}

.app.open {
    border-bottom: 4px solid #a2f0cc;
    padding-top: 4px;
}

.app.multi::after {
    content: "";
    position: absolute;
    right: 0;
    bottom: -4px;
    width: 15px;
    height: 4px;
    background-color: #76b896;
}

.logo {
    font-family: "Open Sans", sans-serif;
    font-weight: 700;
    font-size: 18px;
    fill: #fff;
}

.help {
    font-family: "Open Sans", sans-serif;
    font-weight: 700;
    font-size: 28px;
    fill: #fff;
}

.tray {
    position: relative;
    margin-left: auto;
    display: flex;
    align-items: center;
    gap: 18px;
}

.tray span {
    line-height: 30px;
}

.tray time {
    margin: 0 14px 0 5px;
    line-height: 32px;
    text-align: center;
}

.peek {
    width: 8px;
    height: 70px;
    margin-left: 17px;
    border-left: 1px solid #555;
}
```
